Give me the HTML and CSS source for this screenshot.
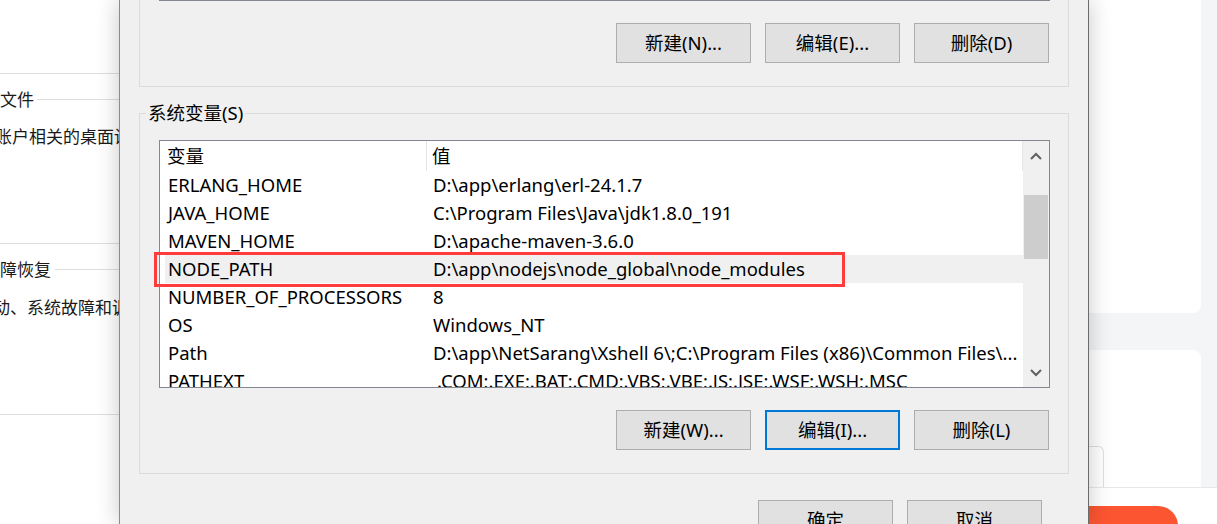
FILE: index.html
```html
<!DOCTYPE html>
<html lang="zh-CN">
<head>
<meta charset="utf-8">
<title>环境变量</title>
<link rel="stylesheet" href="styles.css">
</head>
<body>
<div class="page">
  <aside class="sys-left">
    <div class="sep"></div>
    <div class="sec-title t1"><span>用户配置文件</span><i></i></div>
    <div class="sec-desc d1">与登录账户相关的桌面设置</div>
    <div class="sep s2"></div>
    <div class="sec-title t2"><span>启动和故障恢复</span><i></i></div>
    <div class="sec-desc d2">系统启动、系统故障和调试信息</div>
    <div class="sep s2"></div>
  </aside>

  <section class="dialog">
    <div class="group group-user">
      <div class="list-edge"></div>
      <div class="btn-row">
        <button class="btn">新建(N)...</button>
        <button class="btn">编辑(E)...</button>
        <button class="btn">删除(D)</button>
      </div>
    </div>

    <div class="group group-sys">
      <div class="group-label">系统变量(S)</div>
      <div class="listbox">
        <div class="list-main">
          <div class="list-head">
            <div class="col1">变量</div>
            <div class="col2">值</div>
          </div>
          <div class="row"><div class="c1">ERLANG_HOME</div><div class="c2">D:\app\erlang\erl-24.1.7</div></div>
          <div class="row"><div class="c1">JAVA_HOME</div><div class="c2">C:\Program Files\Java\jdk1.8.0_191</div></div>
          <div class="row"><div class="c1">MAVEN_HOME</div><div class="c2">D:\apache-maven-3.6.0</div></div>
          <div class="row selected"><div class="c1">NODE_PATH</div><div class="c2">D:\app\nodejs\node_global\node_modules</div></div>
          <div class="row"><div class="c1">NUMBER_OF_PROCESSORS</div><div class="c2">8</div></div>
          <div class="row"><div class="c1">OS</div><div class="c2">Windows_NT</div></div>
          <div class="row"><div class="c1">Path</div><div class="c2">D:\app\NetSarang\Xshell 6\;C:\Program Files (x86)\Common Files\...</div></div>
          <div class="row"><div class="c1">PATHEXT</div><div class="c2 ext">.COM;.EXE;.BAT;.CMD;.VBS;.VBE;.JS;.JSE;.WSF;.WSH;.MSC</div></div>
        </div>
        <div class="vscroll">
          <div class="arrow">
            <svg width="12" height="8" viewBox="0 0 12 8"><polyline points="1,7 6,2 11,7" fill="none" stroke="#606060" stroke-width="2"/></svg>
          </div>
          <div class="track"><div class="thumb"></div></div>
          <div class="arrow">
            <svg width="12" height="8" viewBox="0 0 12 8"><polyline points="1,1 6,6 11,1" fill="none" stroke="#606060" stroke-width="2"/></svg>
          </div>
        </div>
      </div>
      <div class="mark"></div>
      <div class="btn-row sys-btns">
        <button class="btn">新建(W)...</button>
        <button class="btn focus">编辑(I)...</button>
        <button class="btn">删除(L)</button>
      </div>
    </div>

    <div class="btn-row dlg-btns">
      <button class="btn">确定</button>
      <button class="btn">取消</button>
    </div>
  </section>

  <aside class="bg-right">
    <div class="card card-a"></div>
    <div class="card card-b"><div class="mini-box"></div></div>
    <div class="bottom-bar"><div class="orange-btn"></div></div>
  </aside>
</div>
</body>
</html>
```

FILE: styles.css
```css
* { box-sizing: border-box; }
html, body { margin: 0; padding: 0; }
body {
  width: 1217px;
  height: 524px;
  overflow: hidden;
  font-family: "Noto Sans", "Noto Sans CJK SC", sans-serif;
  color: #000;
  background: #fff;
}
.page {
  display: flex;
  height: 524px;
}

/* left system properties background */
.sys-left {
  width: 119px;
  flex: none;
  background: #fff;
  overflow: hidden;
  padding-top: 73px;
  font-size: 17px;
  color: #1a1a1a;
  font-family: "Noto Sans CJK SC", sans-serif;
}
.sep { height: 1px; background: #dedede; }
.sep.s2 { margin-top: 95px; }
.sec-title {
  display: flex;
  align-items: center;
  height: 24px;
  line-height: 24px;
  margin-top: 13px;
  white-space: nowrap;
}
.sec-title span { flex: none; }
.sec-title i { flex: 1; height: 1px; background: #dedede; margin-left: 3px; }
.t1 span { margin-left: -68px; }
.t2 span { margin-left: -68px; }
.t2 i { margin-left: 4px; }
.sec-desc {
  height: 24px;
  line-height: 24px;
  margin-top: 13px;
  white-space: nowrap;
}
.d1 { margin-left: -56px; }
.d2 { margin-left: -58px; margin-top: 14px; }

/* dialog */
.dialog {
  width: 970px;
  flex: none;
  background: #f0f0f0;
  border-left: 1px solid #8c8c8c;
  border-right: 1px solid #6b6b6b;
  position: relative;
  z-index: 2;
  box-shadow: 0 0 22px rgba(0, 0, 0, 0.22);
  font-size: 18.5px;
}
.group {
  margin-left: 19px;
  width: 930px;
  border: 1px solid #dcdcdc;
}
.group-user {
  border-top: none;
  height: 87px;
}
.list-edge {
  margin-left: 19px;
  width: 891px;
  height: 1px;
  background: #828790;
}
.btn-row {
  display: flex;
  justify-content: flex-end;
  gap: 14px;
  padding-right: 19px;
}
.group-user .btn-row { margin-top: 22px; }
.btn {
  width: 135px;
  height: 40px;
  flex: none;
  background: #e1e1e1;
  border: 1px solid #adadad;
  font: inherit;
  font-size: 18.5px;
  color: #000;
  padding: 0;
  line-height: 36px;
}
.btn.focus { border: 2px solid #0078d7; }

.group-sys {
  margin-top: 26px;
  height: 361px;
  position: relative;
}
.group-label {
  width: max-content;
  margin: -12px 0 0 6px;
  padding: 0 2px;
  height: 21px;
  line-height: 21px;
  background: #f0f0f0;
}
.listbox {
  margin: 17px 0 0 19px;
  width: 891px;
  height: 248px;
  border: 1px solid #828790;
  background: #fff;
  display: flex;
  overflow: hidden;
}
.list-main {
  flex: 1;
  overflow: hidden;
  white-space: nowrap;
}
.list-head {
  display: flex;
  height: 30px;
  line-height: 30px;
  border-right: 1px solid #e5e5e5;
}
.list-head .col1 {
  width: 267px;
  padding-left: 7px;
  border-right: 1px solid #e5e5e5;
}
.list-head .col2 { padding-left: 5px; }
.row {
  display: flex;
  height: 28px;
  line-height: 28px;
  margin-left: 5px;
}
.row .c1 { width: 262px; padding-left: 3px; flex: none; }
.row .c2 { padding-left: 6px; flex: 1; overflow: hidden; }
.row .c2.ext { padding-left: 10px; }
.row.selected { background: #f0f0f0; }

/* annotation drawn over the list */
.mark {
  position: absolute;
  left: 14px;
  top: 138px;
  width: 691px;
  height: 35px;
  border: 3px solid #ff3b3b;
  pointer-events: none;
}
.vscroll {
  width: 26px;
  flex: none;
  background: #f0f0f0;
  display: flex;
  flex-direction: column;
}
.arrow {
  height: 29px;
  display: flex;
  align-items: center;
  justify-content: center;
}
.track { flex: 1; padding-top: 25px; }
.thumb {
  margin: 0 1px;
  height: 64px;
  background: #cdcdcd;
}
.sys-btns { margin-top: 22px; }
.dlg-btns { margin-top: 26px; padding-right: 46px; }

/* right background page */
.bg-right {
  flex: 1;
  background: #f4f5f7;
  display: flex;
  flex-direction: column;
  overflow: hidden;
}
.card { background: #fff; width: 112px; flex: none; }
.card-a { height: 313px; border-bottom-right-radius: 8px; }
.card-b {
  margin-top: 37px;
  height: 137px;
  border-top-right-radius: 8px;
  display: flex;
  flex-direction: column;
  justify-content: flex-end;
}
.mini-box {
  width: 16px;
  height: 41px;
  border: 1px solid #dcdfe6;
  border-bottom: none;
  border-top-right-radius: 6px;
  margin-left: -1px;
}
.bottom-bar {
  flex: 1 1 auto;
  min-height: 0;
  overflow: hidden;
  background: #fff;
  border-top: 1px solid #e8e8e8;
  padding-top: 18px;
}
.orange-btn {
  width: 129px;
  height: 40px;
  margin-left: -40px;
  border-radius: 24px;
  background: #fc5531;
}
```
